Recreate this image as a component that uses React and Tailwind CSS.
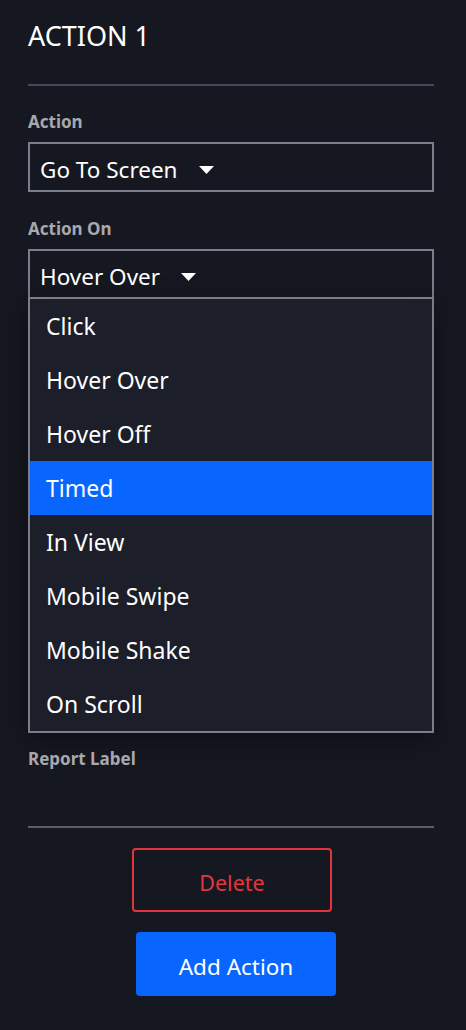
const options = ["Click", "Hover Over", "Hover Off", "Timed", "In View", "Mobile Swipe", "Mobile Shake", "On Scroll"];

function Caret() {
  return (
    <svg width="15" height="9" viewBox="0 0 15 9" className="ml-[21px] mt-[1px]">
      <path d="M0 0 L15 0 L7.5 8 Z" fill="#ffffff" />
    </svg>
  );
}

function SelectBox({ value }) {
  return (
    <div className="flex h-[50px] items-center border-2 border-[#7b7d8b] px-[10px] pt-[5px] text-[22.5px] text-white">
      <span>{value}</span>
      <Caret />
    </div>
  );
}

export default function App() {
  const selected = "Timed";
  return (
    <div
      className="min-h-[1030px] w-[466px] bg-[#161821] pl-[28px] pr-[32px] pt-[16px]"
      style={{ fontFamily: '"Noto Sans", "Open Sans", sans-serif' }}
    >
      <h1 className="text-[27px] leading-[40px] text-white">ACTION 1</h1>

      <div className="mt-[28px] h-[2px] bg-[#464855]" />

      <div className="mt-[25px] text-[17px] font-bold leading-[22px] text-[#a8a8ad]">Action</div>
      <div className="mt-[9px]">
        <SelectBox value="Go To Screen" />
      </div>

      <div className="mt-[26px] text-[17px] font-bold leading-[22px] text-[#a8a8ad]">Action On</div>
      <div className="mt-[9px]">
        <SelectBox value="Hover Over" />
        <ul className="-mt-[2px] border-2 border-[#7b7d8b] bg-[#1c1e2a] shadow-[0_6px_24px_rgba(0,0,0,0.45)]">
          {options.map((o) => (
            <li
              key={o}
              className={
                "flex h-[54px] items-center pl-[16px] text-[23px] text-white " +
                (o === selected ? "bg-[#0866ff]" : "")
              }
            >
              {o}
            </li>
          ))}
        </ul>
      </div>

      <div className="mt-[15px] text-[17px] font-bold leading-[22px] text-[#a8a8ad]">Report Label</div>

      <div className="mt-[56px] h-[2px] bg-[#5a5c68]" />

      <div className="flex flex-col items-center">
        <button className="mt-[20px] ml-[2px] flex h-[64px] w-[200px] items-center justify-center rounded-[4px] border-2 border-[#e5353b] pt-[6px] text-[21.5px] text-[#e5353b]">
          Delete
        </button>
        <button className="mt-[20px] ml-[10px] flex h-[64px] w-[200px] items-center justify-center rounded-[4px] bg-[#0866ff] pt-[5px] text-[22.5px] text-white">
          Add Action
        </button>
      </div>
    </div>
  );
}
